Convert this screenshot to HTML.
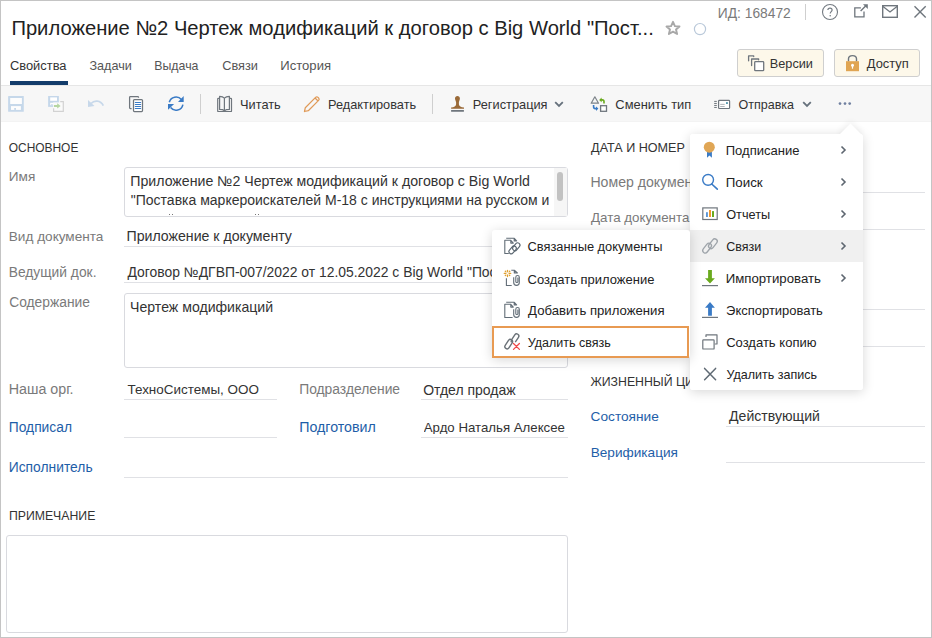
<!DOCTYPE html>
<html><head><meta charset="utf-8"><style>
html,body{margin:0;padding:0;}
body{width:932px;height:638px;overflow:hidden;position:relative;background:#fff;font-family:"Liberation Sans",sans-serif;}
.a{position:absolute;box-sizing:border-box;}
svg.a{overflow:visible;}
.t{position:absolute;white-space:nowrap;line-height:1;}
.menu{background:#fff;border-radius:3px;box-shadow:0 2px 12px rgba(0,0,0,0.16);}
</style></head><body>
<div class="t" style="left:11.38px;top:18px;font-size:20.202px;color:#222;">Приложение №2 Чертеж модификаций к договор с Big World &quot;Пост...</div>
<svg class="a" style="left:665px;top:20px" width="16" height="16" viewBox="0 0 16 16"><path d="M8 1.8 L9.9 6.1 L14.5 6.5 L11 9.5 L12.1 14 L8 11.6 L3.9 14 L5 9.5 L1.5 6.5 L6.1 6.1 Z" fill="none" stroke="#a8a8a8" stroke-width="1.9" stroke-linejoin="round"/></svg>
<svg class="a" style="left:693px;top:23px" width="14" height="14" viewBox="0 0 14 14"><circle cx="7" cy="6.1" r="5.6" fill="none" stroke="#b9c8d9" stroke-width="1.2"/></svg>
<div class="t" style="left:717.86px;top:7px;font-size:13.792px;color:#7a7a7a;">ИД: 168472</div>
<div class="a" style="left:805px;top:4px;width:1px;height:16px;background:#cfcfcf"></div>
<svg class="a" style="left:821px;top:3px" width="18" height="18" viewBox="0 0 18 18"><circle cx="9" cy="9" r="7.5" fill="none" stroke="#747b82" stroke-width="1.1"/><path d="M6.9 7.1 C6.9 5.8 7.8 5.1 9 5.1 C10.2 5.1 11.1 5.9 11.1 7 C11.1 8.5 9.2 8.8 9.2 10.6" fill="none" stroke="#747b82" stroke-width="1.2"/><circle cx="9.2" cy="12.7" r="0.8" fill="#747b82"/></svg>
<svg class="a" style="left:853px;top:3px" width="17" height="17" viewBox="0 0 17 17"><path d="M7.9 4.8 H1.8 V13.8 H11 V8.6" fill="none" stroke="#6f767d" stroke-width="1.3"/><path d="M7.6 8 L12.6 3" stroke="#6f767d" stroke-width="1.4"/><path d="M10 1.3 H14.8 V6.1 Z" fill="#6f767d"/></svg>
<svg class="a" style="left:881px;top:4px" width="18" height="15" viewBox="0 0 18 15"><rect x="1.7" y="1.7" width="14.6" height="11.6" fill="none" stroke="#6f767d" stroke-width="1.4"/><path d="M1.7 2.2 L9 8 L16.3 2.2" fill="none" stroke="#6f767d" stroke-width="1.3"/></svg>
<svg class="a" style="left:913px;top:5px" width="14" height="14" viewBox="0 0 14 14"><path d="M1.5 1.3 L12.7 12.5 M12.7 1.3 L1.5 12.5" stroke="#6f767d" stroke-width="1.4"/></svg>
<div class="a" style="left:737px;top:49px;width:87px;height:28px;background:#fdf8ea;border:1px solid #cfcfcf;border-radius:3px"></div>
<svg class="a" style="left:744px;top:51px" width="24" height="24" viewBox="0 0 24 24"><g fill="none" stroke="#6f767d" stroke-width="1.3" stroke-linecap="round" stroke-linejoin="round"><path d="M4.6 9.8 V4.9 H9.7 V5.6"/><path d="M7.6 14.6 V8 H14.6 V8.8"/><rect x="10.7" y="10.7" width="9" height="9" rx="0.8" fill="#fff"/></g></svg>
<div class="t" style="left:769.75px;top:58px;font-size:12.727px;color:#333;">Версии</div>
<div class="a" style="left:834px;top:49px;width:86px;height:28px;background:#fdf8ea;border:1px solid #cfcfcf;border-radius:3px"></div>
<svg class="a" style="left:845px;top:54px" width="16" height="18" viewBox="0 0 16 18"><path d="M3.5 7.5 V4.8 C3.5 2.8 5 1.6 7.5 1.6 C10 1.6 11.5 2.8 11.5 4.8 V7.5" fill="none" stroke="#6f767d" stroke-width="1.4"/><rect x="1" y="7.2" width="13" height="10" fill="#e0a553"/><circle cx="7.5" cy="11.3" r="1.5" fill="#fff"/><rect x="6.9" y="11.5" width="1.2" height="3.2" fill="#fff"/></svg>
<div class="t" style="left:866.80px;top:58px;font-size:12.893px;color:#333;">Доступ</div>
<div class="t" style="left:9.96px;top:60px;font-size:12.896px;color:#333;">Свойства</div>
<div class="t" style="left:89.39px;top:60px;font-size:12.648px;color:#555;">Задачи</div>
<div class="t" style="left:154.28px;top:60px;font-size:12.343px;color:#555;">Выдача</div>
<div class="t" style="left:222.16px;top:60px;font-size:12.787px;color:#555;">Связи</div>
<div class="t" style="left:280.32px;top:59px;font-size:13.092px;color:#555;">История</div>
<div class="a" style="left:10px;top:81px;width:58px;height:4px;background:#133c6b"></div>
<div class="a" style="left:1px;top:85px;width:930px;height:1px;background:#e6e6e6"></div>
<div class="a" style="left:1px;top:86px;width:930px;height:36px;background:#f7f7f7"></div>
<div class="a" style="left:1px;top:121px;width:930px;height:1px;background:#f3f3f3"></div>
<svg class="a" style="left:4px;top:92px" width="24" height="24" viewBox="0 0 24 24"><rect x="4.1" y="4.1" width="15.7" height="15.7" rx="0.5" fill="#c6d8ea"/><rect x="6.2" y="6" width="11.7" height="6" fill="#fdfdfd"/><rect x="7" y="14.1" width="9.9" height="3.8" fill="#fdfdfd"/><rect x="10.2" y="16" width="1.8" height="1.9" fill="#c6d8ea"/></svg>
<svg class="a" style="left:44px;top:92px" width="24" height="24" viewBox="0 0 24 24"><rect x="4.1" y="4" width="10.8" height="10.9" fill="#c5d7ea"/><rect x="6.2" y="5.4" width="6.8" height="3.4" fill="#fff"/><rect x="6.2" y="10.8" width="6.3" height="2.4" fill="#fff"/><rect x="7" y="12.3" width="1.8" height="1" fill="#c5d7ea"/><rect x="9.2" y="10.4" width="10.2" height="9" fill="#fafafa"/><path d="M16.2 9.6 H19.3 V19.3 H9.6 V16.2" fill="none" stroke="#d2d2d2" stroke-width="1.2"/><path d="M10 13 H13.2 V11.3 L16.6 14 L13.2 16.6 V14.9 H10 Z" fill="#b6d6a2"/></svg>
<svg class="a" style="left:87px;top:98px" width="18" height="11" viewBox="0 0 18 11"><path d="M4 5.5 C7 2.3 13.5 1.8 16.3 7.6" fill="none" stroke="#c7d8ea" stroke-width="1.8"/><path d="M1 2 L1 9 L7.5 8 Z" fill="#c7d8ea"/></svg>
<svg class="a" style="left:124px;top:92px" width="24" height="24" viewBox="0 0 24 24"><path d="M7.6 16.5 H6.4 C5.9 16.5 5.6 16.2 5.6 15.7 V5.3 C5.6 4.8 5.9 4.5 6.4 4.5 H13.7 C14.2 4.5 14.5 4.8 14.5 5.3 V5.7" fill="none" stroke="#6f767d" stroke-width="1.25"/><rect x="9.5" y="7.6" width="9" height="11.9" rx="0.9" fill="#fff" stroke="#6f767d" stroke-width="1.25"/><path d="M11.3 10.4 H16.7 M11.3 12.45 H16.7 M11.3 14.5 H16.7 M11.3 16.55 H16.7" stroke="#3a7bc6" stroke-width="1.05" stroke-linecap="round"/></svg>
<svg class="a" style="left:164px;top:92px" width="24" height="24" viewBox="0 0 24 24"><path d="M5.3 10.2 A7 7 0 0 1 17.4 7.6" fill="none" stroke="#3a7bc6" stroke-width="1.55"/><path d="M19.7 4 V10.1 H14 Z" fill="#3a7bc6"/><path d="M18.9 12.6 A7 7 0 0 1 6.6 15.6" fill="none" stroke="#3a7bc6" stroke-width="1.55"/><path d="M4 17.8 V11.9 H10.1 Z" fill="#3a7bc6"/></svg>
<div class="a" style="left:200px;top:94px;width:1px;height:20px;background:#cfcfcf"></div>
<svg class="a" style="left:212px;top:92px" width="24" height="24" viewBox="0 0 24 24"><g fill="none" stroke="#6f767d" stroke-width="1.2" stroke-linejoin="round"><path d="M12.4 6.1 C11.4 5 9.5 4.4 7.6 4.4 V17.4 C9.5 17.4 11.4 17.9 12.4 18.7 C13.4 17.9 15.4 17.4 17.4 17.4 V4.4 C15.4 4.4 13.4 5 12.4 6.1 Z M12.4 6.1 V18.7"/><path d="M7.6 6.3 H6.3 C5.9 6.3 5.7 6.5 5.7 6.9 V18.9 C5.7 19.3 5.9 19.5 6.3 19.5 H18.9 C19.3 19.5 19.5 19.3 19.5 18.9 V6.9 C19.5 6.5 19.3 6.3 18.9 6.3 H17.4"/></g></svg>
<div class="t" style="left:240.11px;top:99px;font-size:12.779px;color:#333;">Читать</div>
<svg class="a" style="left:300px;top:92px" width="24" height="24" viewBox="0 0 24 24"><path d="M4.5 19.5 L5.3 15.7 L15.6 5.4 C16.3 4.7 17.3 4.7 18 5.4 L18.6 6 C19.3 6.7 19.3 7.7 18.6 8.4 L8.3 18.7 Z M15.3 6.2 L17.8 8.7" fill="none" stroke="#e09a58" stroke-width="1.25" stroke-linejoin="round"/></svg>
<div class="t" style="left:328.05px;top:99px;font-size:12.763px;color:#333;">Редактировать</div>
<div class="a" style="left:432px;top:94px;width:1px;height:20px;background:#cfcfcf"></div>
<svg class="a" style="left:446px;top:92px" width="24" height="24" viewBox="0 0 24 24"><path d="M11.45 4 C12.9 4 13.9 5 13.9 6.6 C13.9 8.2 13 9 12.9 10.5 V12.3 C12.9 14.3 15 15.3 18 15.6 V16.7 H5.1 V15.6 C8 15.3 10.1 14.3 10.1 12.3 V10.5 C10 9 9 8.2 9 6.6 C9 5 10 4 11.45 4 Z" fill="#9a6a38"/><rect x="5.1" y="18" width="12.8" height="1.75" fill="#6f767d"/></svg>
<div class="t" style="left:472.74px;top:99px;font-size:12.801px;color:#333;">Регистрация</div>
<svg class="a" style="left:554px;top:101px" width="10" height="7" viewBox="0 0 10 7"><path d="M1.2 1.2 L5 5 L8.8 1.2" fill="none" stroke="#66717c" stroke-width="1.8"/></svg>
<svg class="a" style="left:586px;top:92px" width="24" height="24" viewBox="0 0 24 24"><path d="M8.85 4.8 L12.5 11.2 H5.2 Z" fill="none" stroke="#7d848a" stroke-width="1.2" stroke-linejoin="round"/><rect x="14.6" y="13.7" width="5.9" height="5.6" fill="#fff" stroke="#6f767d" stroke-width="1.3"/><path d="M18 11.5 V9.6 C18 8.5 17.4 7.9 16.3 7.9 H14.8" fill="none" stroke="#6aaa1e" stroke-width="1.6"/><path d="M15.6 5.6 V10.2 L13.2 7.9 Z" fill="#6aaa1e"/><path d="M7.6 13 V14.8 C7.6 15.9 8.2 16.6 9.3 16.6 H10.6" fill="none" stroke="#3a7bc6" stroke-width="1.6"/><path d="M10 14.4 V19 L12.4 16.6 Z" fill="#3a7bc6"/></svg>
<div class="t" style="left:615.36px;top:99px;font-size:12.889px;color:#333;">Сменить тип</div>
<svg class="a" style="left:710px;top:92px" width="24" height="24" viewBox="0 0 24 24"><rect x="8.6" y="8.4" width="11" height="8.1" rx="0.8" fill="#fff" stroke="#6f767d" stroke-width="1.2"/><path d="M4.2 9.4 H6.8 M4.2 11.45 H6.8 M4.2 13.45 H6.8 M4.2 15.45 H6.8" stroke="#6f767d" stroke-width="1"/><path d="M10.2 12.4 H14.7 M10.2 14.5 H14.7" stroke="#a9adb1" stroke-width="0.9"/><rect x="16" y="10.2" width="1.9" height="1.7" fill="#4a90a8"/></svg>
<div class="t" style="left:738.50px;top:99px;font-size:12.528px;color:#333;">Отправка</div>
<svg class="a" style="left:802px;top:101px" width="10" height="7" viewBox="0 0 10 7"><path d="M1.2 1.2 L5 5 L8.8 1.2" fill="none" stroke="#66717c" stroke-width="1.8"/></svg>
<svg class="a" style="left:837px;top:101px" width="16" height="5" viewBox="0 0 16 5"><circle cx="3" cy="2.6" r="1.35" fill="#7080a0"/><circle cx="8" cy="2.6" r="1.35" fill="#7080a0"/><circle cx="12.7" cy="2.6" r="1.35" fill="#7080a0"/></svg>
<div class="t" style="left:8.73px;top:143px;font-size:11.941px;color:#333;">ОСНОВНОЕ</div>
<div class="t" style="left:8.78px;top:170px;font-size:13.600px;color:#7a7a7a;">Имя</div>
<div class="a" style="left:124px;top:167px;width:444px;height:50px;border:1px solid #d9dadf;border-radius:3px;background:#fff"></div>
<div class="a" style="left:554px;top:168px;width:13px;height:48px;background:#f6f6f6"></div>
<div class="a" style="left:557px;top:172px;width:6px;height:29px;background:#c2c2c2;border-radius:3px"></div>
<div class="t" style="left:130.27px;top:174px;font-size:14.169px;color:#333;">Приложение №2 Чертеж модификаций к договор с Big World</div>
<div class="t" style="left:130.80px;top:193px;font-size:14.014px;color:#333;">&quot;Поставка маркероискателей М-18 с инструкциями на русском и</div>
<div class="a" style="left:169px;top:214px;width:1px;height:1px;background:#777"></div>
<div class="a" style="left:172px;top:214px;width:1px;height:1px;background:#777"></div>
<div class="a" style="left:255px;top:214px;width:1px;height:1px;background:#777"></div>
<div class="a" style="left:258px;top:214px;width:1px;height:1px;background:#777"></div>
<div class="t" style="left:8.78px;top:230px;font-size:13.600px;color:#7a7a7a;">Вид документа</div>
<div class="t" style="left:126.47px;top:229px;font-size:14.151px;color:#333;">Приложение к документу</div>
<div class="a" style="left:124px;top:246px;width:444px;height:1px;background:#e0e1e5"></div>
<div class="t" style="left:8.76px;top:266px;font-size:13.808px;color:#7a7a7a;">Ведущий док.</div>
<div class="t" style="left:127.50px;top:266px;font-size:13.900px;color:#333;">Договор №ДГВП-007/2022 от 12.05.2022 с Big World &quot;Поставка</div>
<div class="a" style="left:124px;top:282px;width:444px;height:1px;background:#e0e1e5"></div>
<div class="t" style="left:9.21px;top:296px;font-size:13.826px;color:#7a7a7a;">Содержание</div>
<div class="a" style="left:124px;top:293px;width:444px;height:75px;border:1px solid #d9dadf;border-radius:3px;background:#fff"></div>
<div class="t" style="left:130.11px;top:300px;font-size:14.100px;color:#333;">Чертеж модификаций</div>
<div class="t" style="left:8.72px;top:382px;font-size:14.286px;color:#7a7a7a;">Наша орг.</div>
<div class="t" style="left:127.50px;top:383px;font-size:13.443px;color:#333;">ТехноСистемы, ООО</div>
<div class="a" style="left:124px;top:399px;width:153px;height:1px;background:#e0e1e5"></div>
<div class="t" style="left:299.19px;top:383px;font-size:13.850px;color:#7a7a7a;">Подразделение</div>
<div class="t" style="left:423.14px;top:383px;font-size:13.994px;color:#333;">Отдел продаж</div>
<div class="a" style="left:421px;top:399px;width:147px;height:1px;background:#e0e1e5"></div>
<div class="t" style="left:8.80px;top:421px;font-size:13.800px;color:#1e5ea8;">Подписал</div>
<div class="a" style="left:124px;top:437px;width:153px;height:1px;background:#e0e1e5"></div>
<div class="t" style="left:299.16px;top:420px;font-size:14.230px;color:#1e5ea8;">Подготовил</div>
<div class="t" style="left:423.77px;top:421px;font-size:13.240px;color:#333;width:141.2px;overflow:hidden;">Ардо Наталья Алексеевна</div>
<div class="a" style="left:421px;top:437px;width:147px;height:1px;background:#e0e1e5"></div>
<div class="t" style="left:8.76px;top:461px;font-size:13.838px;color:#1e5ea8;">Исполнитель</div>
<div class="a" style="left:124px;top:477px;width:444px;height:1px;background:#e0e1e5"></div>
<div class="t" style="left:8.92px;top:510px;font-size:12.289px;color:#333;">ПРИМЕЧАНИЕ</div>
<div class="a" style="left:6px;top:535px;width:562px;height:98px;border:1px solid #d9dadf;border-radius:3px;background:#fff"></div>
<div class="t" style="left:591.11px;top:142px;font-size:12.594px;color:#333;">ДАТА И НОМЕР</div>
<div class="t" style="left:590.44px;top:175px;font-size:14.100px;color:#7a7a7a;">Номер документа</div>
<div class="a" style="left:726px;top:192px;width:199px;height:1px;background:#e0e1e5"></div>
<div class="t" style="left:591.00px;top:211px;font-size:13.351px;color:#7a7a7a;">Дата документа</div>
<div class="a" style="left:726px;top:229px;width:199px;height:1px;background:#e0e1e5"></div>
<div class="a" style="left:726px;top:309px;width:199px;height:1px;background:#e0e1e5"></div>
<div class="a" style="left:726px;top:346px;width:199px;height:1px;background:#e0e1e5"></div>
<div class="t" style="left:590.42px;top:376px;font-size:12.300px;color:#333;">ЖИЗНЕННЫЙ ЦИКЛ</div>
<div class="t" style="left:590.62px;top:410px;font-size:13.667px;color:#1e5ea8;">Состояние</div>
<div class="t" style="left:729.09px;top:409px;font-size:14.092px;color:#333;">Действующий</div>
<div class="a" style="left:726px;top:426px;width:199px;height:1px;background:#e0e1e5"></div>
<div class="t" style="left:590.67px;top:446px;font-size:13.648px;color:#1e5ea8;">Верификация</div>
<div class="a" style="left:726px;top:462px;width:199px;height:1px;background:#e0e1e5"></div>
<div class="a menu" style="left:690px;top:134px;width:173px;height:256px"></div>
<div class="a" style="left:841.5px;top:126.5px;width:17px;height:17px;background:#fff;transform:rotate(45deg);box-shadow:-2px -2px 6px rgba(0,0,0,0.06)"></div>
<div class="a" style="left:690px;top:134px;width:173px;height:256px;background:#fff;border-radius:3px"></div>
<div class="a" style="left:690px;top:230px;width:173px;height:32px;background:#f0f0f0"></div>
<div class="t" style="left:725.76px;top:144px;font-size:13.044px;color:#222;">Подписание</div>
<svg class="a" style="left:838.6px;top:145px" width="9" height="10" viewBox="0 0 9 10"><path d="M2.5 1.5 L6 5 L2.5 8.5" fill="none" stroke="#5d6670" stroke-width="1.6"/></svg>
<div class="t" style="left:725.73px;top:176px;font-size:13.358px;color:#222;">Поиск</div>
<svg class="a" style="left:838.6px;top:177px" width="9" height="10" viewBox="0 0 9 10"><path d="M2.5 1.5 L6 5 L2.5 8.5" fill="none" stroke="#5d6670" stroke-width="1.6"/></svg>
<div class="t" style="left:726.20px;top:209px;font-size:12.725px;color:#222;">Отчеты</div>
<svg class="a" style="left:838.6px;top:209px" width="9" height="10" viewBox="0 0 9 10"><path d="M2.5 1.5 L6 5 L2.5 8.5" fill="none" stroke="#5d6670" stroke-width="1.6"/></svg>
<div class="t" style="left:726.18px;top:241px;font-size:12.488px;color:#222;">Связи</div>
<svg class="a" style="left:838.6px;top:241px" width="9" height="10" viewBox="0 0 9 10"><path d="M2.5 1.5 L6 5 L2.5 8.5" fill="none" stroke="#5d6670" stroke-width="1.6"/></svg>
<div class="t" style="left:725.71px;top:272px;font-size:13.225px;color:#222;">Импортировать</div>
<svg class="a" style="left:838.6px;top:273px" width="9" height="10" viewBox="0 0 9 10"><path d="M2.5 1.5 L6 5 L2.5 8.5" fill="none" stroke="#5d6670" stroke-width="1.6"/></svg>
<div class="t" style="left:726.12px;top:305px;font-size:12.976px;color:#222;">Экспортировать</div>
<div class="t" style="left:726.15px;top:336px;font-size:13.041px;color:#222;">Создать копию</div>
<div class="t" style="left:726.46px;top:369px;font-size:12.524px;color:#222;">Удалить запись</div>
<svg class="a" style="left:698px;top:138px" width="24" height="24" viewBox="0 0 24 24"><path d="M9 14 H13.9 V19.7 L11.45 17.6 L9 19.7 Z" fill="#3a7bc6"/><circle cx="11.3" cy="9.2" r="5.5" fill="#e0a655"/></svg>
<svg class="a" style="left:698px;top:170px" width="24" height="24" viewBox="0 0 24 24"><circle cx="10.1" cy="9.85" r="5.4" fill="none" stroke="#3a7bc6" stroke-width="1.4"/><path d="M13.7 14 L19.3 19.2" stroke="#3a7bc6" stroke-width="1.6" stroke-linecap="round"/></svg>
<svg class="a" style="left:698px;top:202px" width="24" height="24" viewBox="0 0 24 24"><rect x="4.8" y="5.9" width="14.4" height="11.6" fill="#fff" stroke="#6f767d" stroke-width="1.2"/><rect x="8.1" y="10.2" width="1.7" height="4.8" fill="#4a8ad0"/><rect x="11" y="8" width="2" height="7" fill="#f0962e"/><rect x="14" y="9.1" width="2" height="5.9" fill="#6aaa1e"/></svg>
<svg class="a" style="left:698px;top:234px" width="24" height="24" viewBox="0 0 24 24"><g fill="none" stroke="#9ea4aa" stroke-width="1.3"><rect x="-2.5" y="-5.5" width="5" height="11" rx="2.5" transform="translate(14.9 9.7) rotate(38)"/><rect x="-2.5" y="-5.5" width="5" height="11" rx="2.5" transform="translate(9.1 14.1) rotate(38)"/></g></svg>
<svg class="a" style="left:698px;top:266px" width="24" height="24" viewBox="0 0 24 24"><path d="M10.1 4 H13.9 V12.2 H16.9 L12 17.6 L7 12.2 H10.1 Z" fill="#6aaa1e"/><rect x="4" y="19" width="16" height="1.2" fill="#6f767d"/></svg>
<svg class="a" style="left:698px;top:298px" width="24" height="24" viewBox="0 0 24 24"><path d="M10.1 17.7 H13.9 V9.8 H16.9 L12 4 L7 9.8 H10.1 Z" fill="#3a7bc6"/><rect x="4" y="18.8" width="16" height="1.2" fill="#6f767d"/></svg>
<svg class="a" style="left:698px;top:330px" width="24" height="24" viewBox="0 0 24 24"><path d="M8 7 V4.8 H19 V14 H16.8" fill="none" stroke="#6f767d" stroke-width="1.2" stroke-linejoin="round"/><rect x="4.8" y="9.8" width="11.3" height="9.2" rx="0.6" fill="none" stroke="#6f767d" stroke-width="1.2"/></svg>
<svg class="a" style="left:698px;top:362px" width="24" height="24" viewBox="0 0 24 24"><path d="M6.6 6.4 L17.6 17.7 M17.6 6.4 L6.6 17.7" stroke="#5f6a74" stroke-width="1.5" stroke-linecap="round"/></svg>
<div class="a menu" style="left:492px;top:230px;width:198px;height:128px"></div>
<div class="t" style="left:527.56px;top:241px;font-size:12.852px;color:#222;">Связанные документы</div>
<div class="t" style="left:527.55px;top:273px;font-size:12.996px;color:#222;">Создать приложение</div>
<div class="t" style="left:528.10px;top:304px;font-size:13.162px;color:#222;">Добавить приложения</div>
<div class="t" style="left:527.86px;top:337px;font-size:12.501px;color:#222;">Удалить связь</div>
<div class="a" style="left:492px;top:326px;width:197px;height:32px;border:2px solid #e89a52"></div>
<svg class="a" style="left:500px;top:234px" width="24" height="24" viewBox="0 0 24 24"><g fill="none" stroke="#626d77" stroke-width="1.1" stroke-linejoin="round"><path d="M6.2 4.3 H14.3 L16.6 6.9 H14.2 V4.3"/><path d="M8.8 19.5 H4.8 V6.3 H10.8 L13.3 9.1 H10.8 V6.3"/></g><g fill="none" stroke="#5a6670" stroke-width="1.15"><rect x="-2.3" y="-4.4" width="4.6" height="8.8" rx="2.3" transform="translate(16.3 12.8) rotate(40)"/><rect x="-2.3" y="-4.4" width="4.6" height="8.8" rx="2.3" transform="translate(12.6 15.9) rotate(40)"/></g></svg>
<svg class="a" style="left:500px;top:266px" width="24" height="24" viewBox="0 0 24 24"><g stroke="#e0a030" stroke-width="1.3" stroke-linecap="round"><path d="M7.5 4.3 V10.6 M4.3 7.4 H10.7"/></g><g fill="#e0a030"><circle cx="5.5" cy="5.4" r="0.8"/><circle cx="9.6" cy="5.4" r="0.8"/><circle cx="5.5" cy="9.4" r="0.8"/><circle cx="9.6" cy="9.4" r="0.8"/></g><circle cx="7.5" cy="7.4" r="1.1" fill="#fff"/><g fill="none" stroke="#626d77" stroke-width="1.1" stroke-linejoin="round"><path d="M11.3 4.3 H14.6 L17.4 6.9 H14.3 V4.3"/><path d="M6.4 12.2 V19.5 H11.7"/></g><path d="M13.7 11.3 V16.6 A2.8 2.8 0 0 0 19.3 16.6 V11.3 A1.75 1.75 0 0 0 15.8 11.3 V15.4 A1.05 1.05 0 0 0 17.9 15.4 V11.6" fill="none" stroke="#626d77" stroke-width="1.1"/></svg>
<svg class="a" style="left:500px;top:298px" width="24" height="24" viewBox="0 0 24 24"><g fill="none" stroke="#626d77" stroke-width="1.1" stroke-linejoin="round"><path d="M6.2 4.3 H14.3 L16.6 6.9 H14.2 V4.3"/><path d="M12.6 19.5 H4.8 V6.3 H10.8 L13.3 9.1 H10.8 V6.3"/></g><path d="M13.7 11.3 V16.6 A2.8 2.8 0 0 0 19.3 16.6 V11.3 A1.75 1.75 0 0 0 15.8 11.3 V15.4 A1.05 1.05 0 0 0 17.9 15.4 V11.6" fill="none" stroke="#626d77" stroke-width="1.1"/></svg>
<svg class="a" style="left:500px;top:330px" width="24" height="24" viewBox="0 0 24 24"><g fill="none" stroke="#6b7278" stroke-width="1.4"><rect x="-2.2" y="-5.2" width="4.4" height="10.4" rx="2.2" transform="translate(15 8.6) rotate(33)" stroke-dasharray="22 4" stroke-dashoffset="-13"/><rect x="-2.2" y="-5.2" width="4.4" height="10.4" rx="2.2" transform="translate(8.7 14.1) rotate(33)"/></g><path d="M13.5 13.5 L19.4 19.4 M19.4 13.5 L13.5 19.4" stroke="#f04848" stroke-width="1.3" stroke-linecap="round"/></svg>
<div class="a" style="left:0;top:0;width:932px;height:638px;border:1px solid #c4c4c4;pointer-events:none"></div>
</body></html>
